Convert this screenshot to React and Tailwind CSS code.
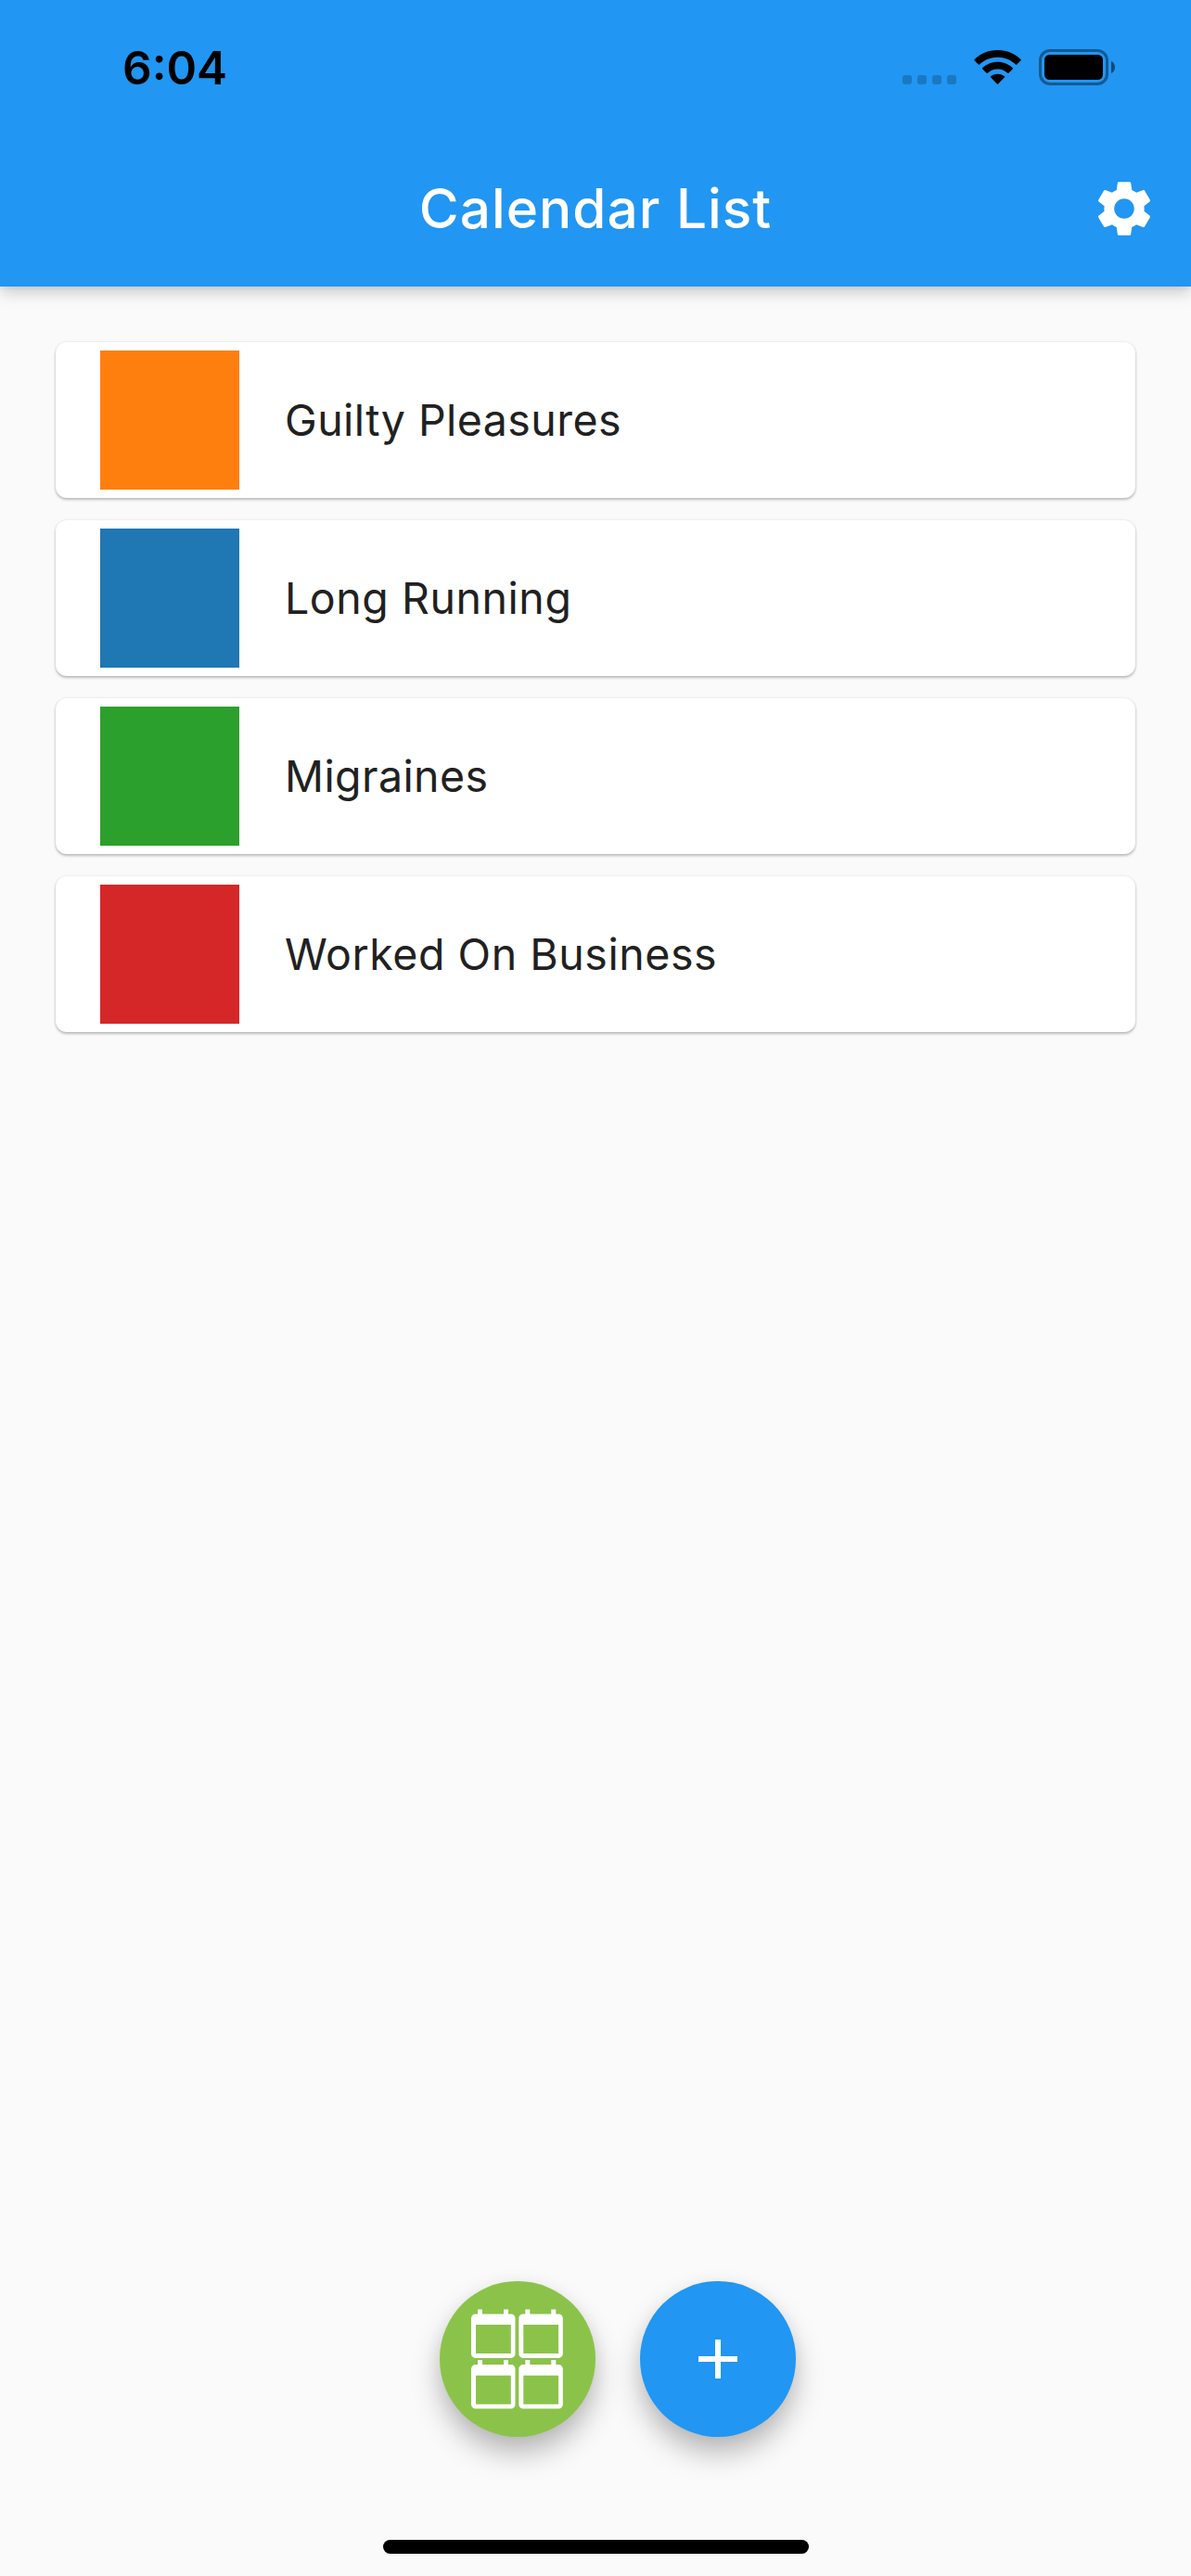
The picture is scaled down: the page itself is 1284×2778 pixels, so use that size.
import { MdSettings, MdAdd } from "react-icons/md";

const calendars = [
  { name: "Guilty Pleasures", color: "bg-[#ff7f0e]", tracking: "tracking-[0.45px]" },
  { name: "Long Running", color: "bg-[#1f77b4]", tracking: "tracking-[0.55px]" },
  { name: "Migraines", color: "bg-[#2ca02c]", tracking: "tracking-[0.4px]" },
  { name: "Worked On Business", color: "bg-[#d62728]", tracking: "tracking-[0.55px]" },
];

function WifiIcon() {
  return (
    <svg className="h-[38px] w-[52px]" viewBox="0 0 52 38">
      <path d="M25.5 0C35.5 0 44.5 3.9 50.6 10.2Q51.1 10.8 50.6 11.3L46.2 15.6Q45.6 16.1 45 15.6C39.6 10.4 33 7.7 25.5 7.7S11.4 10.4 6 15.6Q5.4 16.1 4.8 15.6L.4 11.3Q-.1 10.8.4 10.2C6.5 3.9 15.5 0 25.5 0Z" />
      <path d="M25.5 12.8C31.8 12.8 37.5 15.2 41.8 19.3Q42.3 19.9 41.8 20.4L37.4 24.7Q36.8 25.2 36.2 24.7C33.1 22 29.5 20.5 25.5 20.5S17.9 22 14.8 24.7Q14.2 25.2 13.6 24.7L9.2 20.4Q8.7 19.9 9.2 19.3C13.5 15.2 19.2 12.8 25.5 12.8Z" />
      <path d="M25.5 25.7C28.5 25.7 31 26.7 32.9 28.3Q33.5 28.9 32.9 29.5L26.1 36.5Q25.5 37 24.9 36.5L18.1 29.5Q17.5 28.9 18.1 28.3C20 26.7 22.5 25.7 25.5 25.7Z" />
    </svg>
  );
}

function BatteryIcon() {
  return (
    <svg className="h-[39px] w-[83px]" viewBox="0 0 83 39">
      <rect x="1.5" y="1.5" width="72" height="36" rx="10.5" fill="none" stroke="#000" strokeOpacity="0.4" strokeWidth="3" />
      <rect x="6" y="6" width="63" height="27" rx="5.5" />
      <path d="M78 13c2.5 1 4 3.600 4 6.500s-1.500 5.500-4 6.500z" fillOpacity="0.5" />
    </svg>
  );
}

function CalendarGridIcon() {
  const cell =
    "M7 0h5v5h23V0h5v5h3a4.500 4.500 0 0 1 4.500 4.500v38.500a4.500 4.500 0 0 1-4.500 4.500H4.500a4.500 4.500 0 0 1-4.500-4.500V9.500A4.500 4.500 0 0 1 4.500 5H7zM5 16.700v31h37.800v-31z";
  return (
    <svg className="h-[108px] w-[100px]" viewBox="0 -0.400 100 108" fill="#fff" fillRule="evenodd">
      <path d={cell} />
      <path d={cell} transform="translate(51.300 0)" />
      <path d={cell} transform="translate(0 54.700)" />
      <path d={cell} transform="translate(51.300 54.700)" />
    </svg>
  );
}

export default function App() {
  return (
    <div className="flex h-[2778px] w-[1284px] flex-col bg-[#fafafa] font-['Inter','Liberation_Sans',sans-serif]">
      <header className="flex h-[309px] flex-col bg-[#2196f3] shadow-[0_6px_16px_rgba(0,0,0,0.2),0_1px_6px_rgba(0,0,0,0.06)]">
        <div className="flex h-[141px] items-start justify-between pr-[81px] pl-[132px]">
          <div className="pt-[43px] text-[49.5px] leading-[60px] font-semibold">6:04</div>
          <div className="flex pt-[53px]">
            <div className="mt-[28px] mr-[19px] flex gap-[6px]">
              <i className="size-[10px] rounded-[3px] bg-black/20" />
              <i className="size-[10px] rounded-[3px] bg-black/20" />
              <i className="size-[10px] rounded-[3px] bg-black/20" />
              <i className="size-[10px] rounded-[3px] bg-black/20" />
            </div>
            <div className="mr-[18px] pt-px"><WifiIcon /></div>
            <BatteryIcon />
          </div>
        </div>
        <div className="grid h-[168px] grid-cols-[144px_1fr_144px] items-center">
          <span />
          <h1 className="text-center text-[58.5px] leading-[70px] font-medium tracking-[1px] text-white">Calendar List</h1>
          <button className="flex justify-center" aria-label="Settings">
            <MdSettings className="size-[72px] text-white" />
          </button>
        </div>
      </header>
      <main className="flex flex-1 flex-col gap-6 px-[60px] pt-[60px]">
        {calendars.map((c) => (
          <div
            key={c.name}
            className="flex h-[168px] items-center rounded-[12px] bg-white pl-12 shadow-[0_2px_3px_rgba(0,0,0,0.24),0_0_3px_rgba(0,0,0,0.1)]"
          >
            <div className={`size-[150px] ${c.color}`} />
            <div className={`ml-[49px] text-[46.5px] leading-[56px] text-[#212121] ${c.tracking}`}>{c.name}</div>
          </div>
        ))}
      </main>
      <footer className="flex h-[318px] flex-col items-center justify-between pb-6">
        <div className="ml-12 flex gap-12">
          <button className="flex size-[168px] justify-center rounded-full bg-[#8bc34a] pt-[30px] shadow-[0_18px_30px_rgba(0,0,0,0.25),0_3px_18px_rgba(0,0,0,0.05)]" aria-label="All calendars">
            <CalendarGridIcon />
          </button>
          <button className="flex size-[168px] items-center justify-center rounded-full bg-[#2196f3] shadow-[0_18px_30px_rgba(0,0,0,0.25),0_3px_18px_rgba(0,0,0,0.05)]" aria-label="Add calendar">
            <MdAdd className="size-[72px] text-white" />
          </button>
        </div>
        <div className="h-[15px] w-[459px] rounded-full bg-black" />
      </footer>
    </div>
  );
}
